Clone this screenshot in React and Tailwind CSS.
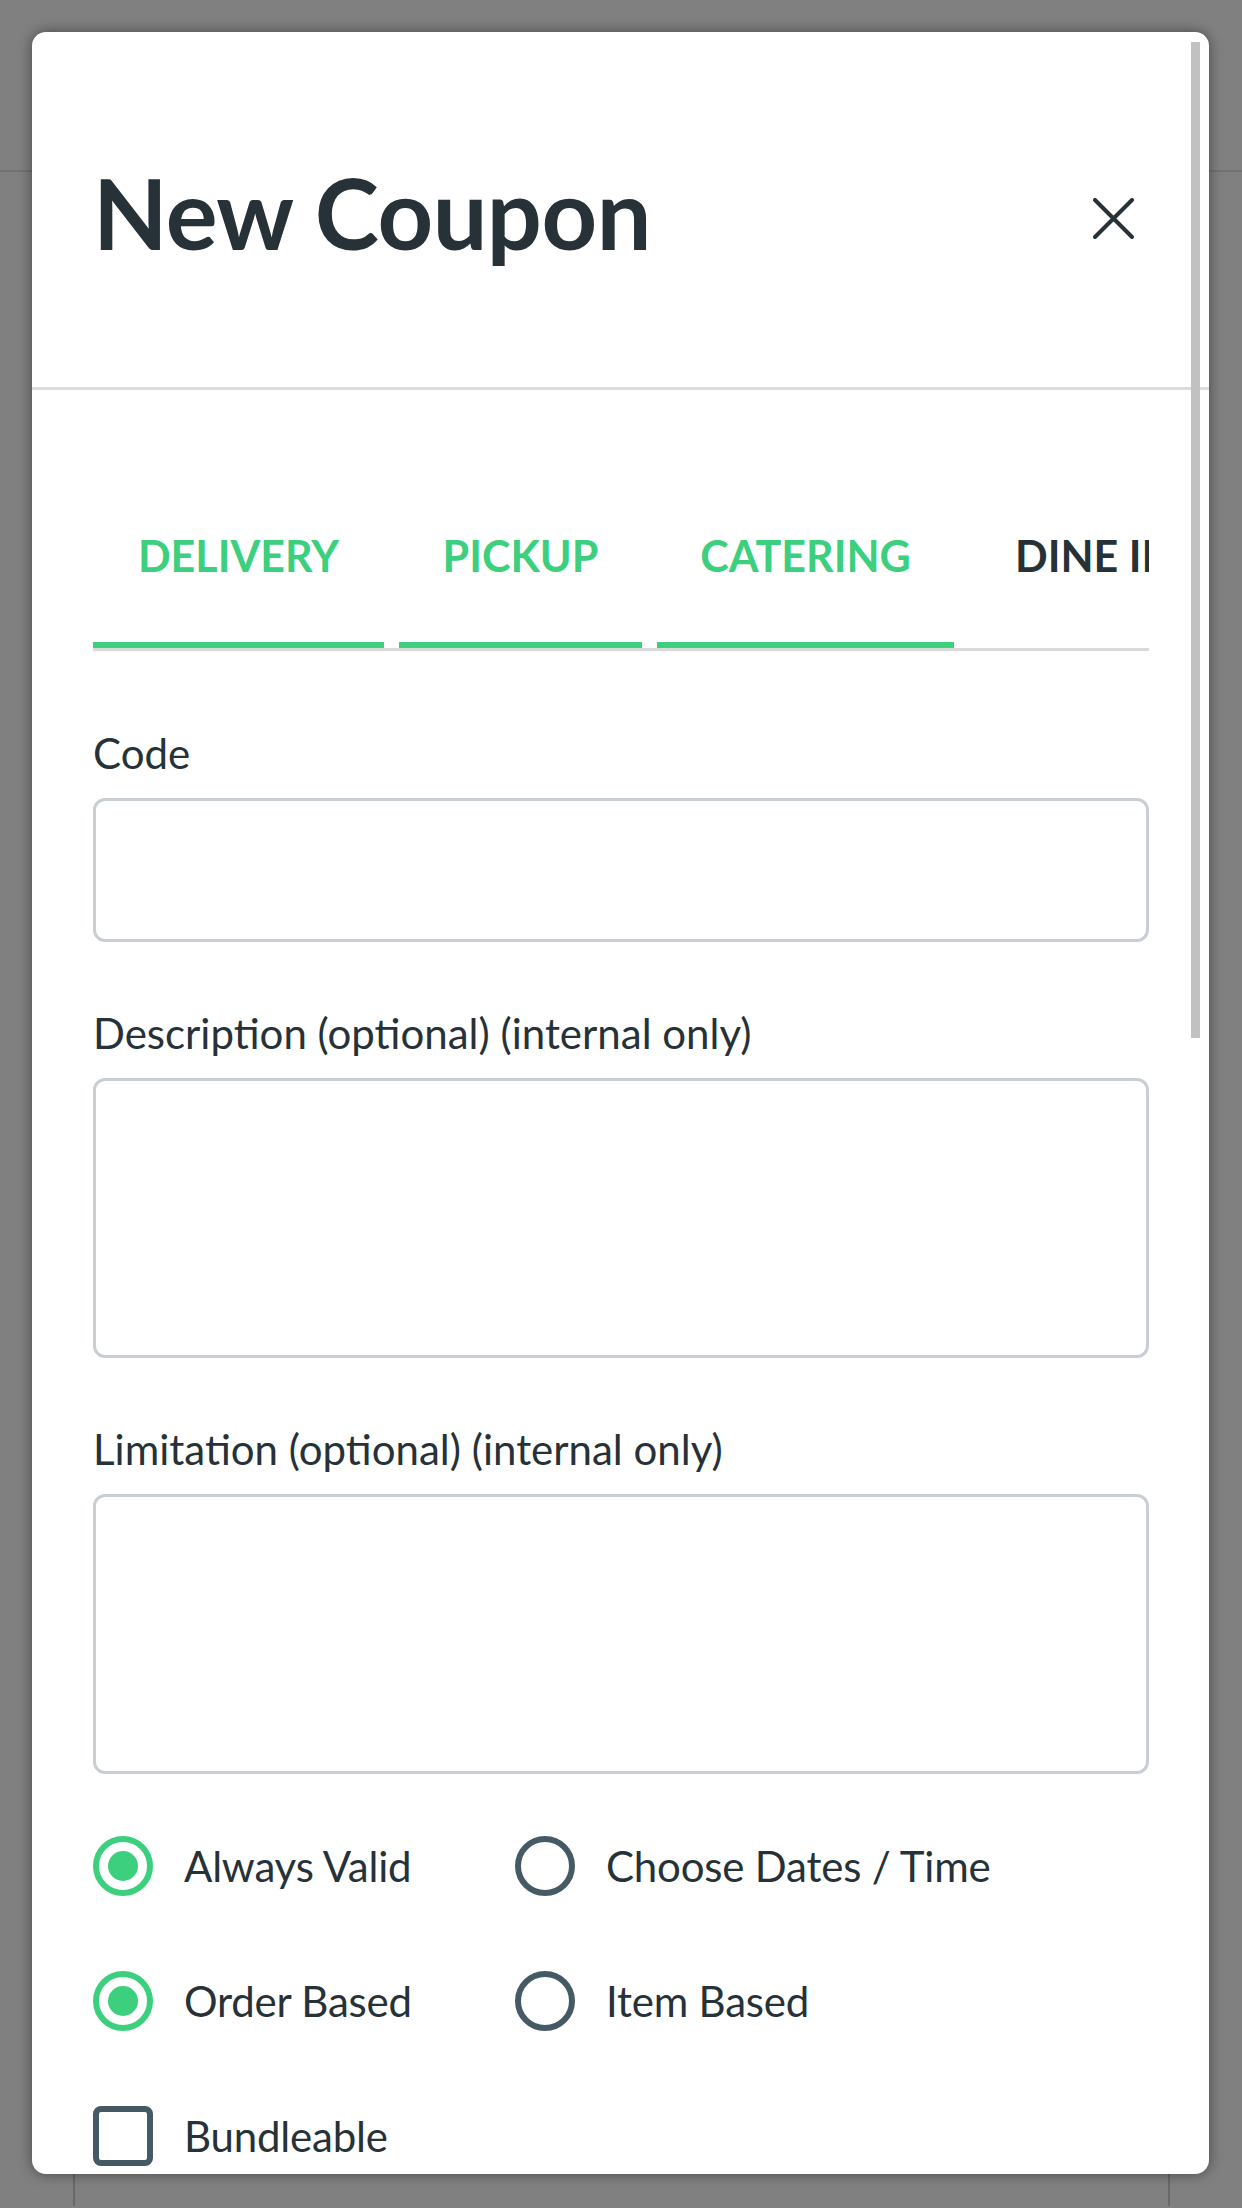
import React from 'react'

const TABS = [
  { label: 'DELIVERY', active: true, w: 'w-[291px]' },
  { label: 'PICKUP', active: true, w: 'w-[243px]' },
  { label: 'CATERING', active: true, w: 'w-[297px]' },
  { label: 'DINE IN', active: false, w: 'w-[180px]' },
]

function Field({ label, tall, last }) {
  return (
    <div className={last ? '' : 'mb-[70px]'}>
      <div className="text-[42px] leading-[42px] text-[#263238]">{label}</div>
      <div
        className={`mt-[24px] rounded-[12px] border-[3px] border-[#c8ced3] bg-white ${tall ? 'h-[280px]' : 'h-[144px]'}`}
      />
    </div>
  )
}

function Radio({ label, checked }) {
  return (
    <div className="flex items-center">
      <span
        className={`flex h-[60px] w-[60px] shrink-0 items-center justify-center rounded-full border-[6px] ${checked ? 'border-[#3ccf7e]' : 'border-[#455a64]'}`}
      >
        {checked && <span className="h-[30px] w-[30px] rounded-full bg-[#3ccf7e]" />}
      </span>
      <span className="ml-[31px] text-[42px] leading-[60px] tracking-[-0.2px] text-[#263238]">{label}</span>
    </div>
  )
}

export default function App() {
  return (
    <div className="relative h-[2208px] overflow-hidden bg-[#808080]" style={{ fontFamily: 'Lato, "Open Sans", sans-serif' }}>
      {/* page behind the overlay */}
      <div className="h-[172px] border-b-[2px] border-[#727272]" />
      <div className="ml-[73px] h-[2034px] w-[1097px] border-x-[2px] border-[#686868]" />

      {/* modal */}
      <div className="absolute left-[32px] top-[32px] h-[2142px] w-[1177px] overflow-hidden rounded-[14px] bg-white shadow-[0_0_14px_rgba(0,0,0,0.45)]">
        <div className="flex items-start border-b-[3px] border-[#dcdcdc] pl-[61px] pr-[75px] pt-[133px] pb-[126px]">
          <h1 className="text-[97px] font-bold leading-[96px] tracking-[-0.5px] text-[#263238]">New Coupon</h1>
          <svg className="ml-auto mt-[33px]" width="41" height="41" viewBox="0 0 41 41" fill="none">
            <path d="M2 2 L39 39 M39 2 L2 39" stroke="#263238" strokeWidth="4" strokeLinecap="round" />
          </svg>
        </div>

        <div className="pl-[61px] pr-[60px]">
          <div className="mt-[145px] flex w-[1056px] gap-[15px] border-b-[3px] border-[#dadada]">
            {TABS.map(t => (
              <div
                key={t.label}
                className={`${t.w} shrink-0 pb-[65px] text-[43px] font-bold leading-[42px] whitespace-nowrap ${t.active ? 'border-b-[6px] border-[#3ccf7e] text-center text-[#3ccf7e]' : 'mb-[6px] overflow-hidden pl-[46px] text-[#263238]'}`}
              >
                {t.label}
              </div>
            ))}
          </div>

          <div className="mt-[81px]">
            <Field label="Code" />
            <Field label="Description (optional) (internal only)" tall />
            <Field label="Limitation (optional) (internal only)" tall last />
          </div>

          <div className="mt-[62px] flex flex-col gap-[75px]">
            <div className="flex">
              <div className="w-[422px]"><Radio label="Always Valid" checked /></div>
              <Radio label="Choose Dates / Time" />
            </div>
            <div className="flex">
              <div className="w-[422px]"><Radio label="Order Based" checked /></div>
              <Radio label="Item Based" />
            </div>
            <div className="flex items-center">
              <span className="h-[60px] w-[60px] shrink-0 rounded-[8px] border-[6px] border-[#455a64]" />
              <span className="ml-[31px] text-[42px] leading-[60px] tracking-[-0.2px] text-[#263238]">Bundleable</span>
            </div>
          </div>
        </div>

        {/* scrollbar thumb */}
        <div className="absolute right-[9px] top-[10px] h-[996px] w-[9px] bg-[#c1c1c1]" />
      </div>
    </div>
  )
}
